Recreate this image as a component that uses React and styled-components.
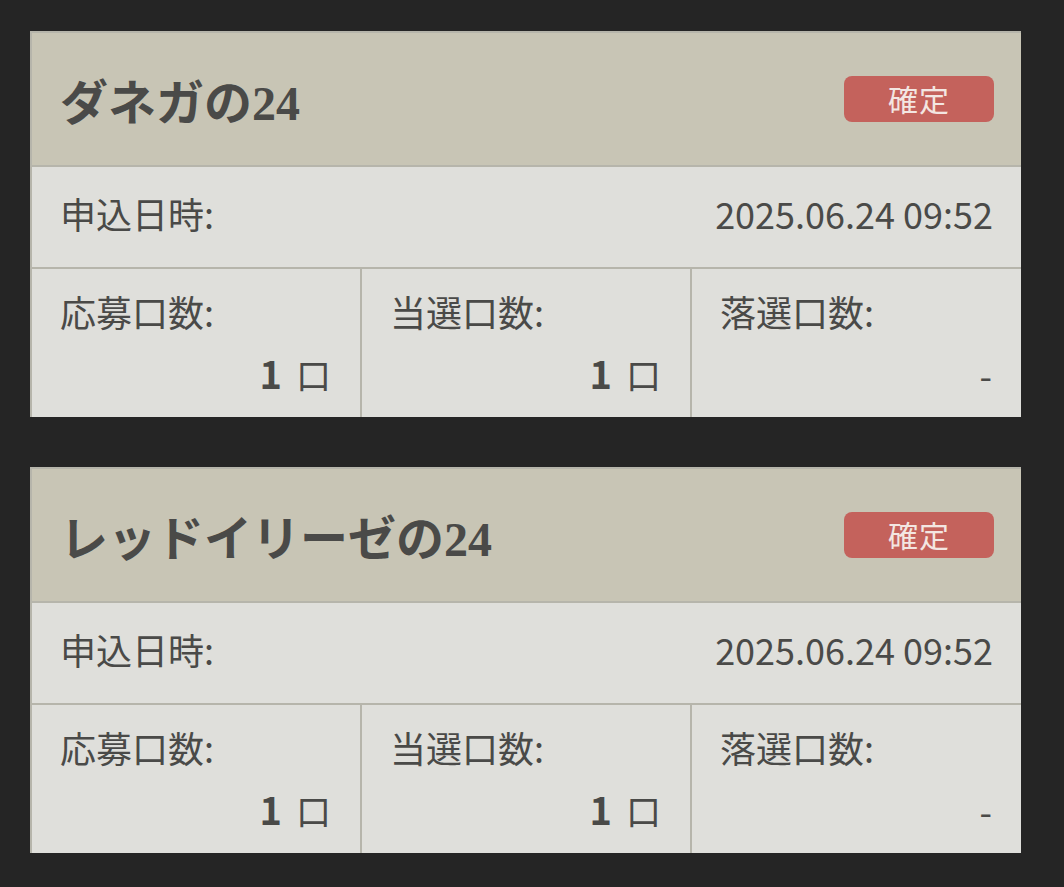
import React from "react";
import styled, { createGlobalStyle } from "styled-components";

const Global = createGlobalStyle`
  html, body { margin: 0; padding: 0; background: #252525; }
  body { font-family: "Noto Sans CJK JP", "Noto Sans", sans-serif; color: #4a4a48; }
`;

const Page = styled.div`
  display: flex;
  flex-direction: column;
  gap: 50px;
  padding: 31px 43px 32px 30px;
`;

const Card = styled.section`
  background: #dfdfdb;
  border-left: 2px solid #b6b5ab;
  border-top: 2px solid #b6b5ab;
`;

const Header = styled.header`
  height: 132px;
  display: flex;
  align-items: center;
  justify-content: space-between;
  background: #c8c5b5;
  border-bottom: 2px solid #b6b5ab;
  padding: 0 27px 0 28px;
`;

const Title = styled.h2`
  margin: 0;
  font-family: "Liberation Serif", "Noto Sans CJK JP", serif;
  font-weight: 700;
  font-size: 48px;
  color: #4a4a48;
  letter-spacing: 0;
`;

const Badge = styled.span`
  width: 150px;
  height: 46px;
  display: flex;
  align-items: center;
  justify-content: center;
  background: #c4625c;
  border-radius: 8px;
  color: #f3e6e2;
  font-size: 30px;
  letter-spacing: 1px;
  padding-bottom: 3px;
  box-sizing: border-box;
`;

const DateRow = styled.div`
  height: 102px;
  box-sizing: border-box;
  display: flex;
  align-items: center;
  justify-content: space-between;
  padding: 0 28px 8px;
  border-bottom: 2px solid #b6b5ab;
  font-size: 36px;
`;

const Stats = styled.div`
  display: grid;
  grid-template-columns: 328px 330px 1fr;
  height: 148px;
`;

const Stat = styled.div`
  display: flex;
  flex-direction: column;
  justify-content: space-between;
  padding: 18px 29px 19px 28px;
  border-left: ${(p) => (p.$first ? "none" : "2px solid #b6b5ab")};
`;

const Label = styled.div`
  font-size: 36px;
  line-height: 48px;
`;

const Value = styled.div`
  text-align: right;
  font-size: 36px;
  line-height: 48px;
`;

const Num = styled.b`
  font-weight: 700;
  font-size: 38px;
  margin-right: 14px;
`;

const Unit = styled.span`
  font-size: 35px;
`;

const data = [
  { name: "ダネガの24", date: "2025.06.24 09:52" },
  { name: "レッドイリーゼの24", date: "2025.06.24 09:52" },
];

export default function App() {
  return (
    <>
      <Global />
      <Page>
        {data.map((d, i) => (
          <Card key={i}>
            <Header>
              <Title>{d.name}</Title>
              <Badge>確定</Badge>
            </Header>
            <DateRow>
              <span>申込日時:</span>
              <span>{d.date}</span>
            </DateRow>
            <Stats>
              <Stat $first>
                <Label>応募口数:</Label>
                <Value>
                  <Num>1</Num>
                  <Unit>口</Unit>
                </Value>
              </Stat>
              <Stat>
                <Label>当選口数:</Label>
                <Value>
                  <Num>1</Num>
                  <Unit>口</Unit>
                </Value>
              </Stat>
              <Stat>
                <Label>落選口数:</Label>
                <Value>-</Value>
              </Stat>
            </Stats>
          </Card>
        ))}
      </Page>
    </>
  );
}
